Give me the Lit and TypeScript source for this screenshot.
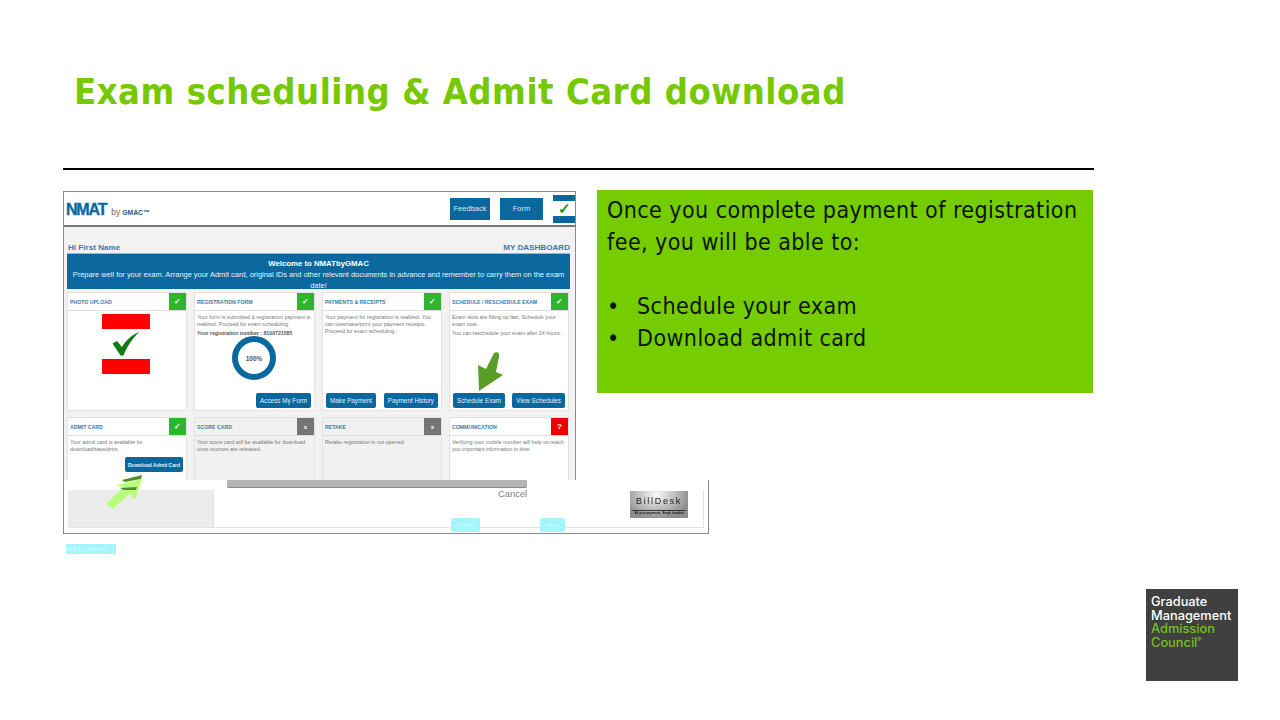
import { LitElement, html, css, svg } from "lit";
import { customElement } from "lit/decorators.js";

type Card = {
  title: string;
  status: "ok" | "off" | "warn";
  lines: string[];
  buttons?: string[];
  muted?: boolean;
  extra?: unknown;
};

const check = svg`<svg class="bigcheck" viewBox="0 0 28 25"><path d="M0.5 12.5 L5 10 L10 16 C14 9 20 4 27.5 0.5 C21 7 15 15 11.5 24.5 L8.5 24.5 Z" fill="#0e7d10"/></svg>`;

const donut = svg`<svg class="donut" viewBox="0 0 44 44"><circle cx="22" cy="22" r="19" fill="#fff" stroke="#0b689f" stroke-width="6"/></svg>`;

const row1: Card[] = [
  {
    title: "PHOTO UPLOAD",
    status: "ok",
    lines: [],
    extra: html`<div class="photo"><i></i>${check}<i></i></div>`,
  },
  {
    title: "REGISTRATION FORM",
    status: "ok",
    lines: [
      "Your form is submitted & registration payment is realized. Proceed for exam scheduling.",
    ],
    extra: html`<p class="strong">Your registration number : 8100721585</p>
      <div class="ring">${donut}<span>100%</span></div>`,
    buttons: ["Access My Form"],
  },
  {
    title: "PAYMENTS & RECEIPTS",
    status: "ok",
    lines: [
      "Your payment for registration is realized. You can view/save/print your payment receipts. Proceed for exam scheduling.",
    ],
    buttons: ["Make Payment", "Payment History"],
  },
  {
    title: "SCHEDULE / RESCHEDULE EXAM",
    status: "ok",
    lines: [
      "Exam slots are filling up fast. Schedule your exam now.",
      "You can reschedule your exam after 24 hours.",
    ],
    buttons: ["Schedule Exam", "View Schedules"],
  },
];

const row2: Card[] = [
  {
    title: "ADMIT CARD",
    status: "ok",
    lines: ["Your admit card is available for download/save/print."],
    extra: html`<div class="dl"><button class="btn tiny">Download Admit Card</button></div>`,
  },
  {
    title: "SCORE CARD",
    status: "off",
    muted: true,
    lines: ["Your score card will be available for download once scorces are released."],
  },
  {
    title: "RETAKE",
    status: "off",
    muted: true,
    lines: ["Retake registration is not opened."],
  },
  {
    title: "COMMUNICATION",
    status: "warn",
    lines: ["Verifying your mobile number will help us reach you important information in time."],
  },
];

const glyph = { ok: "✓", off: "x", warn: "?" };

@customElement("app-root")
export class AppRoot extends LitElement {
  static styles = css`
    :host {
      display: flex;
      flex-direction: column;
      width: 1280px;
      height: 720px;
      background: #fff;
      overflow: hidden;
      font-family: "Liberation Sans", Arial, sans-serif;
    }
    .head {
      box-sizing: border-box;
      width: 1031px;
      height: 170px;
      margin-left: 63px;
      padding: 66px 0 0 11px;
      border-bottom: 2px solid #000;
    }
    h1 {
      margin: 0;
      font-family: "DejaVu Sans", sans-serif;
      font-stretch: condensed;
      font-size: 36px;
      line-height: 52px;
      font-weight: 700;
      letter-spacing: 0.55px;
      color: #76c800;
      white-space: nowrap;
    }
    .content {
      display: flex;
      align-items: flex-start;
      margin: 20px 0 0 63px;
    }
    .shotcol {
      position: relative;
      width: 534px;
      flex: none;
      margin-top: 1px;
      filter: blur(0.4px);
    }
    .panel {
      box-sizing: border-box;
      width: 496px;
      height: 203px;
      padding: 4px 10px;
      background: #75cc00;
      color: #0a1400;
      font-family: "DejaVu Sans", sans-serif;
      font-stretch: condensed;
      font-size: 23px;
      line-height: 32px;
      letter-spacing: 0.44px;
    }
    .panel p { margin: 0 0 32px; }
    .panel ul { margin: 0; padding: 0; list-style: none; }
    .panel li { display: flex; }
    .panel li::before { content: "•"; width: 30px; flex: none; }

    .win {
      box-sizing: border-box;
      width: 513px;
      height: 289px;
      overflow: hidden;
      border: 1px solid #8a8a8a;
      border-bottom: 0;
      background: #f2f2f2;
    }
    .bar {
      box-sizing: border-box;
      display: flex;
      align-items: center;
      height: 35px;
      padding: 0 0 0 2px;
      background: #fff;
      border-bottom: 2px solid #777;
    }
    .logo { display: flex; align-items: baseline; gap: 3px; color: #0b689f; flex: 1; padding-top: 2px; }
    .logo b { font-size: 16px; letter-spacing: -1.2px; font-weight: 700; -webkit-text-stroke: 0.4px #0b689f; }
    .logo span { font-size: 8.5px; color: #666; margin-left: 2px; }
    .logo em { font-style: normal; font-weight: 700; font-size: 6.8px; color: #24577c; margin-left: -1px; }
    .navb {
      display: flex;
      align-items: center;
      justify-content: center;
      height: 22px;
      background: #0b689f;
      color: #d8e8f2;
      font-size: 7.5px;
    }
    .navb.a { width: 40px; margin-right: 10px; }
    .navb.b { width: 43px; margin-right: 10px; }
    .menu {
      display: flex;
      flex-direction: column;
      justify-content: center;
      align-items: center;
      box-sizing: border-box;
      width: 22px;
      height: 28px;
      border-top: 6px solid #0b689f;
      border-bottom: 7px solid #0b689f;
      color: #159a15;
      font-size: 15px;
      line-height: 15px;
      font-weight: 700;
    }
    .hi {
      display: flex;
      justify-content: space-between;
      align-items: flex-end;
      height: 26px;
      padding: 0 5px 0 4px;
      color: #3a7aa8;
      font-weight: 700;
      font-size: 8.1px;
      line-height: 10px;
    }
    .banner {
      box-sizing: border-box;
      height: 36px;
      margin: 0 5px 0 3px;
      padding: 4px 2px 0;
      background: #0b689f;
      color: #e8f2f8;
      text-align: center;
      font-size: 7.45px;
      line-height: 10.5px;
      border-top: 1px solid #7fc0e0;
    }
    .banner b { display: block; color: #fff; font-size: 7.8px; line-height: 12px; }
    .grid {
      display: grid;
      grid-template-columns: 120px 121px 120px 120px;
      grid-auto-rows: 119px;
      column-gap: 7px;
      row-gap: 6px;
      margin: 3px 0 0 3px;
    }
    .card {
      display: flex;
      flex-direction: column;
      box-sizing: border-box;
      background: #fff;
      border: 1px solid #e2e2e2;
      min-width: 0;
    }
    .card.muted { background: #f1f1f1; }
    .ch {
      display: flex;
      align-items: center;
      justify-content: space-between;
      flex: none;
      height: 17px;
      padding-left: 2px;
      border-bottom: 1px solid #ddd;
      color: #3a7aa8;
      font-size: 5.2px;
      font-weight: 700;
    }
    .st {
      display: flex;
      align-items: center;
      justify-content: center;
      width: 17px;
      height: 17px;
      color: #fff;
      font-size: 8px;
      font-weight: 700;
    }
    .st.ok { background: #2db52d; }
    .st.off { background: #757575; font-size: 6px; }
    .st.warn { background: #f00000; }
    .cb {
      flex: 1;
      display: flex;
      flex-direction: column;
      padding: 3px 3px 2px 2px;
      color: #777;
      font-size: 5.35px;
      line-height: 7px;
    }
    .cb p { margin: 0 0 2px; }
    .cb .strong { color: #555; font-weight: 700; margin: 0; font-size: 5.2px; }
    .actions {
      display: flex;
      justify-content: space-between;
      margin-top: auto;
      padding-left: 1px;
    }
    .actions.right { justify-content: flex-end; }
    .btn {
      height: 15px;
      padding: 0 4px;
      border: 0;
      border-radius: 2px;
      background: #0b689f;
      color: #e4f0f7;
      font-family: inherit;
      font-size: 6.3px;
      white-space: nowrap;
    }
    .btn.tiny { font-size: 5px; font-weight: 700; padding: 0 2px; width: 58px; }
    .dl { display: flex; justify-content: flex-end; margin-top: 2px; }
    .photo {
      display: flex;
      flex-direction: column;
      align-items: center;
      margin: 0 0 0 -2px;
    }
    .photo i { display: block; width: 48px; height: 15px; background: #ff0000; }
    .bigcheck { display: block; width: 28px; height: 25px; margin: 2px 0 3px; }
    .ring {
      position: relative;
      width: 44px;
      height: 44px;
      margin: -1px auto 0;
    }
    .donut { display: block; width: 44px; height: 44px; }
    .ring span {
      position: absolute;
      inset: 0;
      display: flex;
      align-items: center;
      justify-content: center;
      color: #555;
      font-size: 6.5px;
      font-weight: 700;
    }

    .strip {
      position: relative;
      box-sizing: border-box;
      width: 646px;
      height: 54px;
      border: 1px solid #8a8a8a;
      border-top: 0;
      display: flex;
      background: #fff;
    }
    .inner {
      display: flex;
      flex: 1;
      margin: 10px 4px 5px 4px;
      border-bottom: 1px solid #e2e2e2;
      border-right: 1px solid #e2e2e2;
    }
    .side {
      width: 145px;
      background: #ececec;
      border-right: 1px solid #ddd;
    }
    .pay { flex: 1; }
    .scrollbar {
      position: absolute;
      left: 163px;
      top: 0;
      width: 300px;
      height: 8px;
      background: #b5b5b5;
      border-bottom: 1px solid #888;
      border-radius: 0 0 2px 2px;
      box-sizing: border-box;
    }
    .cancel {
      position: absolute;
      left: 434px;
      top: 8px;
      color: #7a7a7a;
      font-size: 9.4px;
      line-height: 12px;
    }
    .bill {
      position: absolute;
      left: 566px;
      top: 11px;
      box-sizing: border-box;
      width: 58px;
      height: 27px;
      background: radial-gradient(ellipse at 45% 15%, #fbfbfb, #8d8d8d 75%);
      color: #222;
      text-align: center;
      font-size: 9px;
      letter-spacing: 1.7px;
      line-height: 13px;
      padding-top: 4px;
    }
    .bill small {
      display: block;
      margin: 2px 2px 0;
      border-top: 1px solid #333;
      font: 700 3px/5px "Liberation Sans", sans-serif;
      letter-spacing: 0;
      white-space: nowrap;
      color: #111;
    }
    .cy {
      position: absolute;
      top: 38px;
      height: 14px;
      border-radius: 2px;
      background: #a5f6fb;
      color: #d6fbfd;
      font-size: 5px;
      line-height: 14px;
      text-align: center;
    }
    .cy.a { left: 387px; width: 29px; }
    .cy.b { left: 476px; width: 25px; }
    .ghost {
      width: 50px;
      height: 10px;
      margin: 10px 0 0 3px;
      background: #a5f6fb;
      color: #d6fbfd;
      font-size: 5px;
      line-height: 10px;
      white-space: nowrap;
      box-shadow: 11px 9px 0 -8.5px #d9fbfd;
    }
    .over { position: absolute; pointer-events: none; }
    .over.a1 { left: 412px; top: 159px; width: 30px; height: 44px; }
    .over.a2 { left: 42px; top: 283px; width: 40px; height: 36px; }

    .foot {
      display: flex;
      justify-content: flex-end;
      margin-top: auto;
      padding: 0 42px 39px 0;
    }
    .gm {
      box-sizing: border-box;
      width: 92px;
      height: 92px;
      padding: 6px 5px;
      background: #404040;
      color: #fff;
      font-family: Inter, "Liberation Sans", sans-serif;
      font-size: 12.8px;
      line-height: 13.7px;
      font-weight: 500;
    }
    .gm span { display: block; white-space: nowrap; }
    .gm .g { color: #74c01c; }
    .gm sup { font-size: 6px; line-height: 0; vertical-align: 5px; }
  `;

  private card(c: Card) {
    const right = c.buttons?.length === 1;
    return html`<div class="card ${c.muted ? "muted" : ""}">
      <div class="ch"><span>${c.title}</span><span class="st ${c.status}">${glyph[c.status]}</span></div>
      <div class="cb">
        ${c.lines.map((l) => html`<p>${l}</p>`)}
        ${c.extra ?? ""}
        ${c.buttons
          ? html`<div class="actions ${right ? "right" : ""}">
              ${c.buttons.map((b) => html`<button class="btn">${b}</button>`)}
            </div>`
          : ""}
      </div>
    </div>`;
  }

  render() {
    return html`
      <div class="head"><h1>Exam scheduling &amp; Admit Card download</h1></div>
      <div class="content">
        <div class="shotcol">
          <div class="win">
            <div class="bar">
              <div class="logo"><b>NMAT</b><span>by</span><em>GMAC™</em></div>
              <div class="navb a">Feedback</div>
              <div class="navb b">Form</div>
              <div class="menu">✓</div>
            </div>
            <div class="hi"><span>Hi First Name</span><span>MY DASHBOARD</span></div>
            <div class="banner">
              <b>Welcome to NMATbyGMAC</b>
              Prepare well for your exam. Arrange your Admit card, original IDs and other relevant documents in advance and remember to carry them on the exam date!
            </div>
            <div class="grid">
              ${row1.map((c) => this.card(c))} ${row2.map((c) => this.card(c))}
            </div>
          </div>
          <div class="strip">
            <div class="inner">
              <div class="side"></div>
              <div class="pay"></div>
            </div>
            <div class="scrollbar"></div>
            <div class="cancel">Cancel</div>
            <div class="bill">BillDesk<small>All your payments. Single location</small></div>
            <div class="cy a">Create</div>
            <div class="cy b">Next</div>
          </div>
          <div class="ghost">Help &amp; Contact Us</div>
          <svg class="over a1" viewBox="0 0 30 44">
            <path d="M19 3 C22 1 25 3 24 7 L21 22 L28 25 L4 41 L3 15 L11 19 Z" fill="#5a9e28"/>
          </svg>
          <svg class="over a2" viewBox="0 0 40 36">
            <path d="M1 30 L18 14 L12 11 L37 5 L30 26 L25 20 L8 35 Z" fill="#b9ff7c"/>
            <path d="M17 6 L37 1 L36 5 L20 8 Z M15 14 L32 13 L31 16 L19 16 Z" fill="#4f8f25"/>
          </svg>
        </div>
        <div class="panel">
          <p>Once you complete payment of registration fee, you will be able to:</p>
          <ul>
            <li>Schedule your exam</li>
            <li>Download admit card</li>
          </ul>
        </div>
      </div>
      <div class="foot">
        <div class="gm">
          <span>Graduate</span>
          <span>Management</span>
          <span class="g">Admission</span>
          <span class="g">Council<sup>®</sup></span>
        </div>
      </div>
    `;
  }
}
